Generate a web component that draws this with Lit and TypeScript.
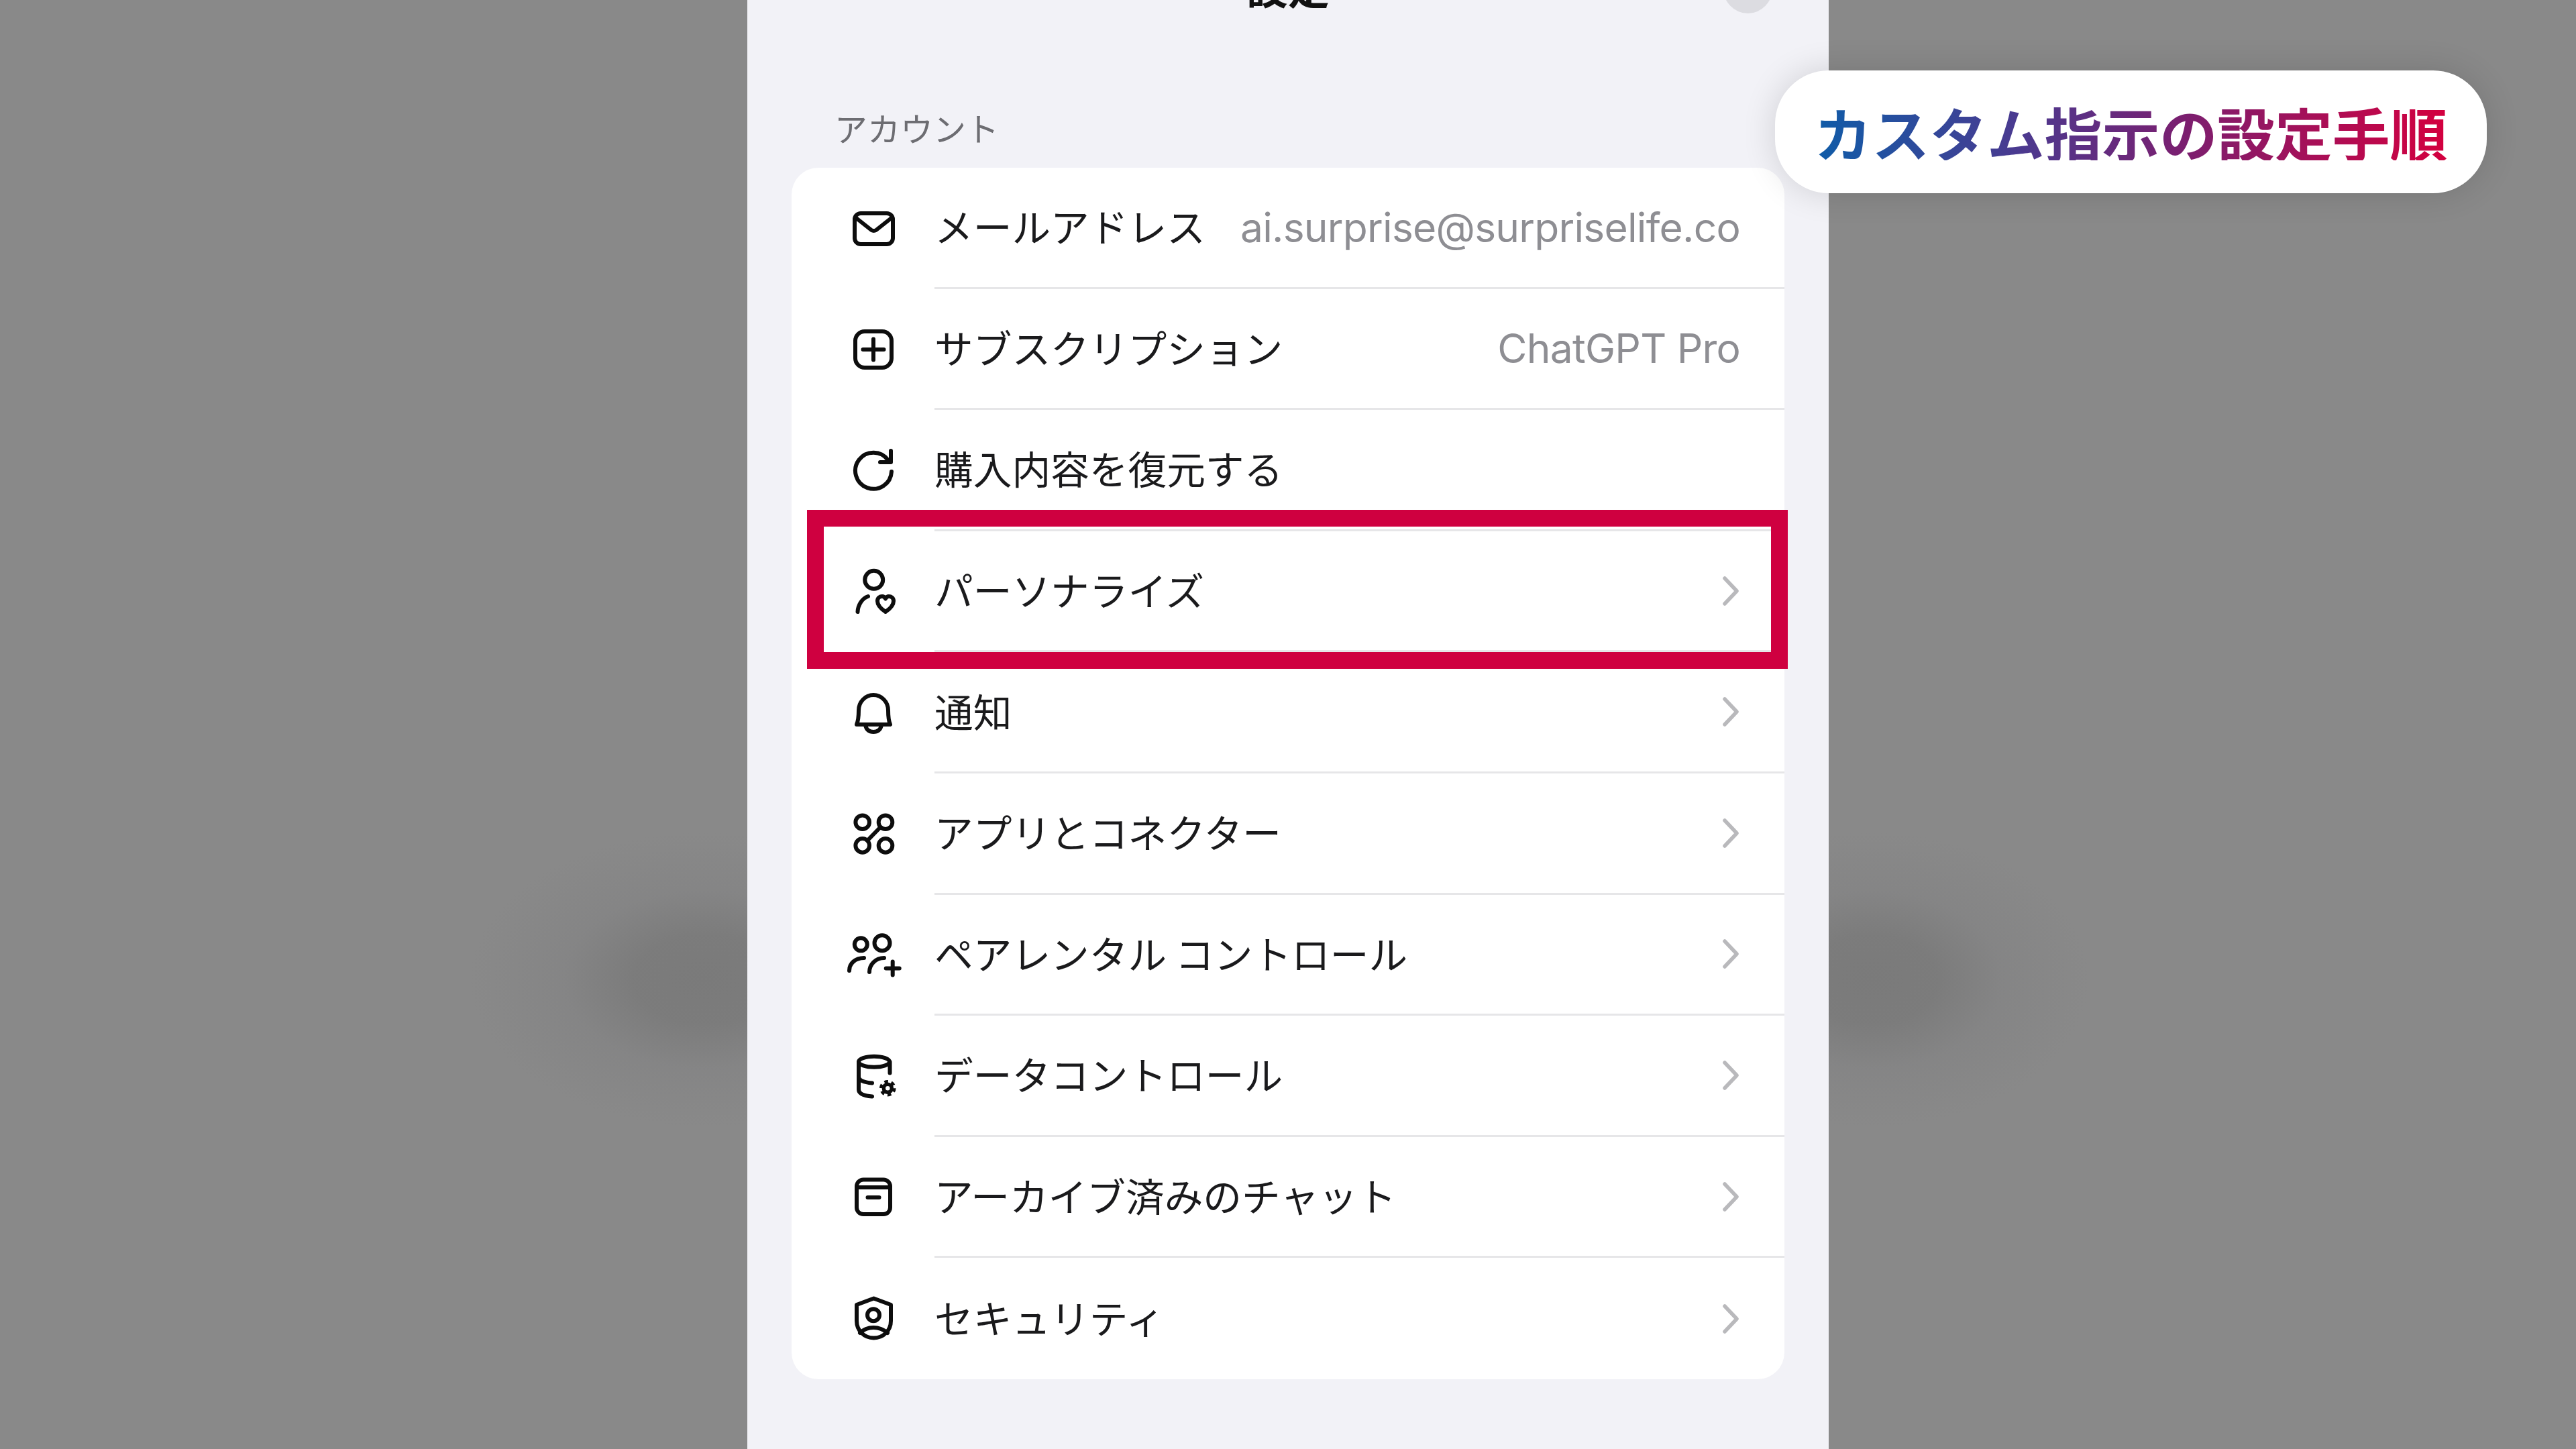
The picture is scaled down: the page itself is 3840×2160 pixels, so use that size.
import { LitElement, html, css, svg } from "lit";
import { customElement } from "lit/decorators.js";

// icons are drawn on an 84 box, centred on the icon column
const icons = {
  mail: svg`<rect x="14" y="20" width="57" height="46" rx="9"/><path d="M15 26 L39 45 Q42.5 47 46 45 L70 26"/>`,
  plus: svg`<rect x="15" y="15" width="54" height="54" rx="14"/><path d="M26.5 42 H57.5 M42 26.5 V57.5"/>`,
  restore: svg`<path d="M69 44 A27 27 0 1 1 64 27"/><path d="M68 13 V30 H52"/>`,
  person: svg`<circle cx="42.7" cy="24.3" r="13.5"/><path d="M18.5 72 C19 62 25 52 34 49"/><path d="M60 72 C54 68 48 63 48 56 C48 51 52 49 55 49 C57.5 49 59 50.5 60 52.5 C61 50.5 62.5 49 65 49 C68 49 72 51 72 56 C72 63 66 68 60 72 Z"/>`,
  bell: svg`<path d="M17 59 Q20 52 20 38 A22 23 0 0 1 64 38 Q64 52 67 59 Z"/><path d="M30 60 Q32 70 42 70 Q52 70 54 60"/>`,
  apps: svg`<circle cx="25.7" cy="24.7" r="10.3"/><circle cx="60" cy="24.7" r="10.3"/><circle cx="25.7" cy="59.4" r="10.3"/><circle cx="60" cy="59.4" r="10.3"/><path d="M52 32.5 L33.5 51.5"/>`,
  parental: svg`<circle cx="23.3" cy="25.8" r="9.5"/><circle cx="55" cy="23.8" r="11.5"/><path d="M6 65 C6 54 15 46 28 46"/><path d="M36 67 C36 56 45 46 58 46"/><path d="M60.7 61.4 H80.7 M70.7 51.4 V71.4"/>`,
  data: svg`<ellipse cx="43" cy="20.8" rx="23" ry="8"/><path d="M20 21 V62 Q20 71 40 72.5"/><path d="M20 44 Q22 51 40 52.5"/><path d="M66.5 21 V37.5"/><circle cx="63.3" cy="60.2" r="6" stroke-width="5.5"/><circle cx="63.3" cy="60.2" r="10" stroke-width="4.5" stroke-dasharray="5.5 4.97" stroke-linecap="butt"/>`,
  archive: svg`<rect x="17" y="15.5" width="50" height="51.5" rx="10"/><path d="M17 27 H67"/><path d="M33.5 42 H50.5"/>`,
  shield: svg`<path d="M42.5 11.5 L17 21 V45 C17 59 28 70.5 42.5 70.5 C57 70.5 68 59 68 45 V21 Z"/><circle cx="42" cy="36.3" r="9"/><path d="M22 63 Q30 55 42 55 Q54 55 63 63"/>`,
};

const rows: { icon: keyof typeof icons; label: string; value?: string; chevron?: boolean }[] = [
  { icon: "mail", label: "メールアドレス", value: "ai.surprise@surpriselife.co" },
  { icon: "plus", label: "サブスクリプション", value: "ChatGPT Pro" },
  { icon: "restore", label: "購入内容を復元する" },
  { icon: "person", label: "パーソナライズ", chevron: true },
  { icon: "bell", label: "通知", chevron: true },
  { icon: "apps", label: "アプリとコネクター", chevron: true },
  { icon: "parental", label: "ペアレンタル コントロール", chevron: true },
  { icon: "data", label: "データコントロール", chevron: true },
  { icon: "archive", label: "アーカイブ済みのチャット", chevron: true },
  { icon: "shield", label: "セキュリティ", chevron: true },
];

@customElement("app-root")
export class AppRoot extends LitElement {
  static styles = css`
    :host {
      display: block;
      position: relative;
      width: 3840px;
      height: 2160px;
      overflow: hidden;
      background: #898989;
      font-family: "Noto Sans CJK JP", sans-serif;
    }

    .page {
      display: flex;
      justify-content: center;
      height: 100%;
    }

    .blob {
      position: absolute;
      top: 1240px;
      height: 440px;
      background: radial-gradient(closest-side, rgba(100, 100, 100, 0.4) 0%, rgba(100, 100, 100, 0.36) 30%, rgba(120, 120, 122, 0.25) 60%, rgba(137, 137, 137, 0) 100%);
    }

    .blob.left {
      left: 700px;
      width: 700px;
    }

    .blob.right {
      left: 2465px;
      width: 650px;
    }

    .sheet {
      position: relative;
      width: 1612px;
      box-sizing: border-box;
      padding: 0 66px;
      background: #f2f2f7;
    }

    .header {
      display: grid;
      grid-template-columns: 1fr auto 1fr;
      align-items: center;
      height: 80px;
      margin-top: -60px;
      padding: 0 17px;
    }

    .title {
      grid-column: 2;
      font-size: 62px;
      font-weight: 700;
      line-height: 80px;
      color: #111;
    }

    .close {
      justify-self: end;
      width: 75px;
      height: 80px;
      border-radius: 50%;
      background: #dcdce1;
    }

    .section {
      margin: 140px 0 30px 64px;
      font-size: 49px;
      line-height: 60px;
      color: #6d6d72;
    }

    .card {
      background: #fff;
      border-radius: 40px;
    }

    .row {
      display: flex;
      align-items: stretch;
      height: 180.6px;
      padding-left: 80px;
      gap: 49px;
    }

    .icon {
      flex: none;
      align-self: center;
      width: 84px;
      height: 84px;
      fill: none;
      stroke: #0d0d0d;
      stroke-width: 6;
      stroke-linecap: round;
      stroke-linejoin: round;
    }

    .body {
      flex: 1;
      display: flex;
      align-items: center;
      justify-content: space-between;
      box-sizing: border-box;
      padding-right: 66px;
      border-bottom: 3px solid #e6e6e8;
    }

    .row:last-child .body {
      border-bottom: none;
    }

    .label {
      font-size: 57.7px;
      line-height: 80px;
      margin-bottom: 5px;
      color: #1a1a1c;
      white-space: nowrap;
    }

    .value {
      font-family: Inter, sans-serif;
      font-size: 60.5px;
      letter-spacing: -0.78px;
      line-height: 80px;
      color: #8e8e93;
      white-space: nowrap;
    }

    .chevron {
      width: 24px;
      height: 44px;
      margin-right: 2px;
      fill: none;
      stroke: #b9b9bc;
      stroke-width: 5.5;
      stroke-linecap: round;
      stroke-linejoin: round;
    }

    .highlight {
      position: absolute;
      left: 1203px;
      top: 760px;
      width: 1462px;
      height: 237px;
      box-sizing: border-box;
      border: 25px solid #cf0040;
    }

    .pill {
      position: absolute;
      top: 105px;
      left: 2646px;
      width: 1061px;
      height: 183px;
      display: flex;
      align-items: center;
      justify-content: center;
      border-radius: 80px;
      background: #fff;
      box-shadow: 0 0 50px rgba(0, 0, 0, 0.14);
    }

    .pill span {
      font-size: 85.8px;
      font-weight: 700;
      line-height: 1;
      white-space: nowrap;
      background: linear-gradient(90deg, #0f5ca8 0%, #4a3a90 32%, #7a1f70 58%, #d4003f 100%);
      -webkit-background-clip: text;
      background-clip: text;
      color: transparent;
    }
  `;

  render() {
    return html`
      <div class="blob left"></div>
      <div class="blob right"></div>
      <div class="page">
        <div class="sheet">
          <div class="header">
            <div class="title">設定</div>
            <div class="close"></div>
          </div>
          <div class="section">アカウント</div>
          <div class="card">
            ${rows.map(
              (r) => html`
                <div class="row">
                  <svg class="icon" viewBox="0 0 84 84">${icons[r.icon]}</svg>
                  <div class="body">
                    <span class="label">${r.label}</span>
                    ${r.value ? html`<span class="value">${r.value}</span>` : ""}
                    ${r.chevron
                      ? html`<svg class="chevron" viewBox="0 0 24 44"><path d="M3 3 L21 22 L3 41" /></svg>`
                      : ""}
                  </div>
                </div>
              `
            )}
          </div>
        </div>
      </div>
      <div class="highlight"></div>
      <div class="pill"><span>カスタム指示の設定手順</span></div>
    `;
  }
}
